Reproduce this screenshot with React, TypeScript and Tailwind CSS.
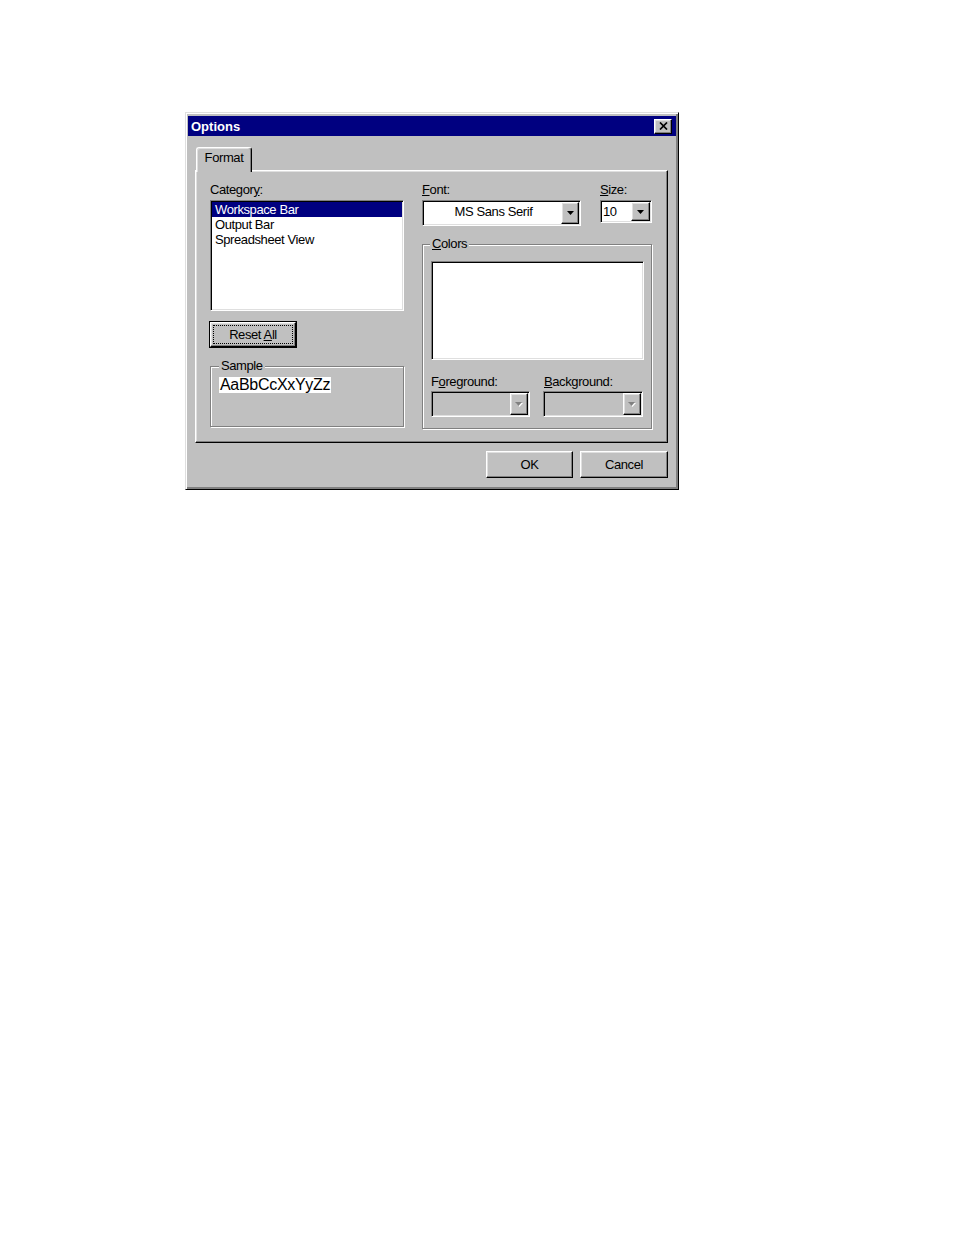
import React from "react";

const raised =
  "border border-t-white border-l-white border-r-black border-b-black shadow-[inset_-1px_-1px_0_#808080,inset_1px_1px_0_#dfdfdf]";
const sunken =
  "border border-t-[#808080] border-l-[#808080] border-r-white border-b-white shadow-[inset_1px_1px_0_#000,inset_-1px_-1px_0_#dfdfdf]";
const etched =
  "border border-[#808080] shadow-[inset_1px_1px_0_#fff,1px_1px_0_#fff]";

function Arrow({ disabled = false }: { disabled?: boolean }) {
  if (disabled) {
    return (
      <svg width="8" height="5" viewBox="0 0 8 5">
        <polygon points="1,1 8,1 4.5,5" fill="#fff" />
        <polygon points="0,0 7,0 3.5,4" fill="#808080" />
      </svg>
    );
  }
  return (
    <svg width="7" height="4" viewBox="0 0 7 4">
      <polygon points="0,0 7,0 3.5,4" fill="#000" />
    </svg>
  );
}

function DropBtn({ w, h, disabled = false }: { w: string; h: string; disabled?: boolean }) {
  return (
    <div className={`${raised} ${w} ${h} bg-[#c0c0c0] flex items-center justify-center shrink-0`}>
      <Arrow disabled={disabled} />
    </div>
  );
}

export default function App() {
  return (
    <div
      className="min-h-screen bg-white pt-[112px] pl-[185px] text-black"
      style={{ fontFamily: '"Liberation Sans", Arial, sans-serif' }}
    >
      <div
        className="w-[494px] h-[378px] bg-[#c0c0c0] border border-t-[#dfdfdf] border-l-[#dfdfdf] border-r-black border-b-black shadow-[inset_1px_1px_0_#fff,inset_-1px_-1px_0_#808080,inset_-2px_-2px_0_#808080] pt-[3px] px-[2px] flex flex-col text-[13px] tracking-[-0.4px] leading-[15px]"
      >
        {/* Title bar */}
        <div className="h-[20px] bg-[#000080] flex items-center justify-between pl-[3px] pr-[4px]">
          <span className="text-white font-bold text-[13px] tracking-normal">Options</span>
          <div className={`${raised} w-[18px] h-[15px] bg-[#c0c0c0] flex items-center justify-center`}>
            <svg width="9" height="8" viewBox="0 0 9 8">
              <path d="M1 0.5 L8 7.5 M8 0.5 L1 7.5" stroke="#000" strokeWidth="1.7" />
            </svg>
          </div>
        </div>

        {/* Body */}
        <div className="pl-[7px] pr-[8px] pt-[11px] flex flex-col">
          {/* Tab strip */}
          <div className="flex pl-[1px] h-[23px] items-start">
            <div className="relative z-10 w-[56px] h-[25px] bg-[#c0c0c0] border-l border-t border-r border-l-white border-t-white border-r-black rounded-t-[3px] shadow-[inset_-1px_0_0_#808080,inset_1px_1px_0_#dfdfdf] flex items-start justify-center pt-[2px]">
              <span>Format</span>
            </div>
          </div>

          {/* Tab panel */}
          <div className={`${raised} w-[473px] h-[273px] pl-[14px] pt-[11px] flex gap-[18px]`}>
            {/* Left column */}
            <div className="w-[194px] flex flex-col">
              <div>
                Categor<span className="underline">y</span>:
              </div>
              <div className={`${sunken} mt-[3px] h-[111px] w-[194px] bg-white p-[1px]`}>
                <div className="h-[15px] bg-[#000080] text-white pl-[3px]">Workspace Bar</div>
                <div className="h-[15px] pl-[3px]">Output Bar</div>
                <div className="h-[15px] pl-[3px]">Spreadsheet View</div>
              </div>
              <div className="mt-[10px] ml-[-1px] w-[88px] h-[27px] border border-black">
                <div className={`${raised} w-full h-full p-[2px]`}>
                  <div className="w-full h-full border border-dotted border-black flex items-center justify-center">
                    <span>
                      Reset <span className="underline">A</span>ll
                    </span>
                  </div>
                </div>
              </div>
              <div className={`${etched} relative mt-[18px] h-[61px] w-[194px] pl-[8px] pt-[10px]`}>
                <span className="absolute top-[-9px] left-[8px] px-[2px] bg-[#c0c0c0]">Sample</span>
                <span className="inline-block bg-white text-[16px] leading-[16px] tracking-[-0.3px] px-[1px]">
                  AaBbCcXxYyZz
                </span>
              </div>
            </div>

            {/* Right column */}
            <div className="w-[230px] flex flex-col">
              <div className="flex gap-[19px]">
                <div className="w-[159px] flex flex-col">
                  <div>
                    <span className="underline">F</span>ont:
                  </div>
                  <div className={`${sunken} mt-[3px] h-[26px] bg-white p-[1px] flex items-stretch`}>
                    <div className="flex-1 flex items-center justify-center pl-[2px] pb-[3px]">MS Sans Serif</div>
                    <DropBtn w="w-[18px]" h="h-[22px]" />
                  </div>
                </div>
                <div className="w-[52px] flex flex-col">
                  <div>
                    <span className="underline">S</span>ize:
                  </div>
                  <div className={`${sunken} mt-[3px] h-[23px] bg-white p-[1px] flex items-stretch`}>
                    <div className="flex-1 flex items-center pl-[1px]">10</div>
                    <DropBtn w="w-[19px]" h="h-[19px]" />
                  </div>
                </div>
              </div>

              <div className={`${etched} relative mt-[18px] h-[185px] w-[230px] pl-[8px] pt-[16px]`}>
                <span className="absolute top-[-9px] left-[7px] px-[2px] bg-[#c0c0c0]">
                  <span className="underline">C</span>olors
                </span>
                <div className={`${sunken} w-[213px] h-[99px] bg-white`} />
                <div className="flex gap-[13px] mt-[14px]">
                  <div className="w-[99px] flex flex-col">
                    <div>
                      F<span className="underline">o</span>reground:
                    </div>
                    <div className={`${sunken} mt-[2px] h-[26px] bg-[#c0c0c0] p-[1px] flex justify-end`}>
                      <DropBtn w="w-[18px]" h="h-[22px]" disabled />
                    </div>
                  </div>
                  <div className="w-[100px] flex flex-col">
                    <div className="pl-[1px]">
                      <span className="underline">B</span>ackground:
                    </div>
                    <div className={`${sunken} mt-[2px] h-[26px] bg-[#c0c0c0] p-[1px] flex justify-end`}>
                      <DropBtn w="w-[18px]" h="h-[22px]" disabled />
                    </div>
                  </div>
                </div>
              </div>
            </div>
          </div>

          {/* Buttons */}
          <div className="mt-[8px] flex justify-end gap-[7px]">
            <div className={`${raised} w-[87px] h-[27px] flex items-center justify-center`}>OK</div>
            <div className={`${raised} w-[88px] h-[27px] flex items-center justify-center`}>Cancel</div>
          </div>
        </div>
      </div>
    </div>
  );
}
